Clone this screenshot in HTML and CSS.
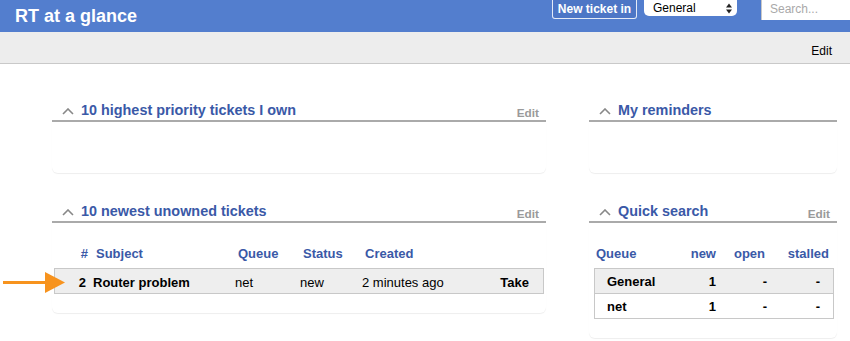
FILE: index.html
```html
<!DOCTYPE html>
<html lang="en">
<head>
<meta charset="utf-8">
<title>RT at a glance</title>
<link rel="stylesheet" href="styles.css">
</head>
<body>
<header class="topbar">
  <h1 class="app-title">RT at a glance</h1>
  <div class="top-actions">
    <button class="new-ticket" type="button">New ticket in</button>
    <div class="queue-select">
      <span>General</span>
      <svg class="select-arrows" width="6" height="11" viewBox="0 0 6 11"><polygon points="0,4.5 3,0.5 6,4.5" fill="#222"/><polygon points="0,6.5 3,10.5 6,6.5" fill="#222"/></svg>
    </div>
    <div class="search"><span class="placeholder">Search...</span></div>
  </div>
</header>
<nav class="pagebar"><span class="page-edit">Edit</span></nav>

<main class="dashboard">
  <div class="col col-main">
    <section class="box">
      <div class="box-title">
        <svg class="chev" width="12" height="7" viewBox="0 0 12 7"><polyline points="1,6 6,1 11,6" fill="none" stroke="#888" stroke-width="1.6"/></svg>
        <span class="box-name">10 highest priority tickets I own</span>
        <span class="box-edit">Edit</span>
      </div>
      <div class="box-body empty"></div>
    </section>

    <section class="box">
      <div class="box-title">
        <svg class="chev" width="12" height="7" viewBox="0 0 12 7"><polyline points="1,6 6,1 11,6" fill="none" stroke="#888" stroke-width="1.6"/></svg>
        <span class="box-name">10 newest unowned tickets</span>
        <span class="box-edit">Edit</span>
      </div>
      <div class="box-body">
        <table class="tickets">
          <colgroup>
            <col class="w-id"><col class="w-subject"><col class="w-queue"><col class="w-status"><col class="w-created"><col class="w-take">
          </colgroup>
          <thead>
            <tr><th class="c-id">#</th><th>Subject</th><th>Queue</th><th>Status</th><th>Created</th><th></th></tr>
          </thead>
          <tbody>
            <tr><td class="c-id b">2</td><td class="b">Router problem</td><td>net</td><td>new</td><td>2 minutes ago</td><td class="c-take b">Take</td></tr>
          </tbody>
        </table>
      </div>
    </section>
  </div>

  <div class="col col-side">
    <section class="box">
      <div class="box-title">
        <svg class="chev" width="12" height="7" viewBox="0 0 12 7"><polyline points="1,6 6,1 11,6" fill="none" stroke="#888" stroke-width="1.6"/></svg>
        <span class="box-name">My reminders</span>
      </div>
      <div class="box-body empty"></div>
    </section>

    <section class="box">
      <div class="box-title">
        <svg class="chev" width="12" height="7" viewBox="0 0 12 7"><polyline points="1,6 6,1 11,6" fill="none" stroke="#888" stroke-width="1.6"/></svg>
        <span class="box-name">Quick search</span>
        <span class="box-edit">Edit</span>
      </div>
      <div class="box-body">
        <table class="quick">
          <colgroup>
            <col class="q1"><col class="q2"><col class="q3"><col class="q4">
          </colgroup>
          <thead>
            <tr><th class="h-queue">Queue</th><th class="h-new">new</th><th class="h-open">open</th><th class="h-stalled">stalled</th></tr>
          </thead>
          <tbody>
            <tr class="shade"><td class="d-queue">General</td><td class="d-new">1</td><td class="d-open">-</td><td class="d-stalled">-</td></tr>
            <tr><td class="d-queue">net</td><td class="d-new">1</td><td class="d-open">-</td><td class="d-stalled">-</td></tr>
          </tbody>
        </table>
      </div>
    </section>
  </div>
</main>

<div class="pointer-arrow" aria-hidden="true">
  <svg width="62" height="21" viewBox="0 0 62 21"><rect x="0" y="9" width="44" height="3" fill="#f7931e"/><polygon points="42,0 62,10.5 42,21" fill="#f7931e"/></svg>
</div>
</body>
</html>
```

FILE: styles.css
```css
* { box-sizing: border-box; }

html, body {
  margin: 0;
  padding: 0;
  background: #fff;
  font-family: "Liberation Sans", Arial, sans-serif;
  font-size: 13px;
  color: #000;
}

body { position: relative; width: 850px; height: 341px; overflow: hidden; }

/* top blue bar */
.topbar {
  display: flex;
  align-items: flex-start;
  height: 32px;
  background: #537ece;
  padding-left: 15px;
  overflow: hidden;
}

.app-title {
  margin: 0;
  padding-top: 5px;
  font-size: 18px;
  line-height: 22px;
  font-weight: bold;
  color: #fff;
}

.top-actions {
  display: flex;
  align-items: flex-start;
  margin-left: auto;
  margin-right: -12px;
}

.new-ticket {
  margin: 0;
  height: 19px;
  width: 85px;
  padding: 0;
  border: 1px solid rgba(255, 255, 255, 0.85);
  border-top: none;
  border-radius: 0 0 3px 3px;
  background: #4d76c6;
  color: #fff;
  font-family: "Liberation Sans", Arial, sans-serif;
  font-weight: bold;
  font-size: 12px;
  line-height: 18px;
  text-align: center;
}

.queue-select {
  display: flex;
  align-items: center;
  justify-content: space-between;
  width: 93px;
  height: 16px;
  margin-left: 7px;
  padding: 0 5px 0 9px;
  background: #fff;
  border-radius: 0 0 5px 5px;
  font-size: 12px;
  line-height: 15px;
  color: #000;
}

.select-arrows { display: block; }

.search {
  width: 101px;
  height: 20px;
  margin-left: 24px;
  padding-left: 8px;
  background: #fff;
  border-left: 1px solid #c8c8c8;
  font-size: 12px;
  line-height: 19px;
}

.placeholder { color: #a9a9a9; }

/* gray page bar */
.pagebar {
  height: 32px;
  background: #ededed;
  border-bottom: 1px solid #c9c9c9;
  display: flex;
  justify-content: flex-end;
  padding: 11px 18px 0 0;
  font-size: 12px;
  line-height: 16px;
}

/* dashboard */
.dashboard {
  display: flex;
  gap: 43px;
  padding: 36px 0 0 52px;
}

.col {
  display: flex;
  flex-direction: column;
  gap: 28px;
}

.col-main { width: 494px; }
.col-side { width: 248px; }

.box-title {
  display: flex;
  align-items: flex-start;
  height: 22px;
  padding: 0 7px 0 10px;
  border-bottom: 2px solid #aaa;
}

.chev {
  display: block;
  margin-top: 8px;
  flex: none;
}

.box-name {
  margin-left: 7px;
  font-size: 14.4px;
  line-height: 20px;
  font-weight: bold;
  color: #3a59a7;
}

.box-edit {
  margin-left: auto;
  align-self: flex-end;
  font-size: 11.8px;
  line-height: 14px;
  font-weight: bold;
  color: #9a9a9a;
}

.box-body {
  border-radius: 0 0 6px 6px;
  box-shadow: 0 1px 1px rgba(0, 0, 0, 0.07);
  padding: 22px 0 19px;
}

.box-body.empty { height: 51px; padding: 0; }

/* ticket table */
.tickets {
  table-layout: fixed;
  width: 490px;
  margin-left: 2px;
  border-collapse: separate;
  border-spacing: 0;
}

.w-id { width: 34px; }
.w-subject { width: 142px; }
.w-queue { width: 65px; }
.w-status { width: 62px; }
.w-created { width: 123px; }
.w-take { width: 64px; }

.tickets th {
  text-align: left;
  padding: 0 0 5px 8px;
  font-size: 13px;
  line-height: 18px;
  font-weight: bold;
  color: #3a59a7;
  white-space: nowrap;
}

.tickets th.c-id { text-align: right; padding: 0 0 5px 0; }

.tickets td {
  background: #eee;
  border-top: 1px solid #c8c8c8;
  border-bottom: 1px solid #c8c8c8;
  padding: 3px 0 0 5px;
  line-height: 21px;
  white-space: nowrap;
}

.tickets td.c-id {
  text-align: right;
  border-left: 1px solid #c8c8c8;
  padding: 3px 2px 0 0;
}

.tickets td.c-take {
  text-align: right;
  border-right: 1px solid #c8c8c8;
  padding: 3px 14px 0 0;
}

.b { font-weight: bold; }

/* quick search */
.quick {
  table-layout: fixed;
  width: 240px;
  margin-left: 5px;
  border-collapse: separate;
  border-spacing: 0;
}

.q1 { width: 76px; }
.q2 { width: 50px; }
.q3 { width: 52px; }
.q4 { width: 62px; }

.quick th {
  padding: 0 0 5px;
  font-size: 13px;
  line-height: 18px;
  font-weight: bold;
  color: #3a59a7;
  white-space: nowrap;
}

.h-queue { text-align: left; padding-left: 2px !important; }
.h-new { text-align: right; padding-right: 4px !important; }
.h-open { text-align: right; padding-right: 7px !important; }
.h-stalled { text-align: right; padding-right: 5px !important; }

.quick td {
  border-top: 1px solid #c8c8c8;
  padding-top: 3px;
  line-height: 20px;
  font-weight: bold;
  text-align: right;
}

.quick tr:last-child td { border-bottom: 1px solid #c8c8c8; }
.quick .shade td { background: #eee; }

.quick td.d-queue {
  text-align: left;
  padding-left: 12px;
  border-left: 1px solid #c8c8c8;
}

.quick td.d-new { padding-right: 4px; }
.quick td.d-open { padding-right: 5px; }
.quick td.d-stalled { padding-right: 13px; border-right: 1px solid #c8c8c8; }

/* annotation arrow over the page */
.pointer-arrow {
  position: absolute;
  left: 3px;
  top: 272px;
  line-height: 0;
}
```
